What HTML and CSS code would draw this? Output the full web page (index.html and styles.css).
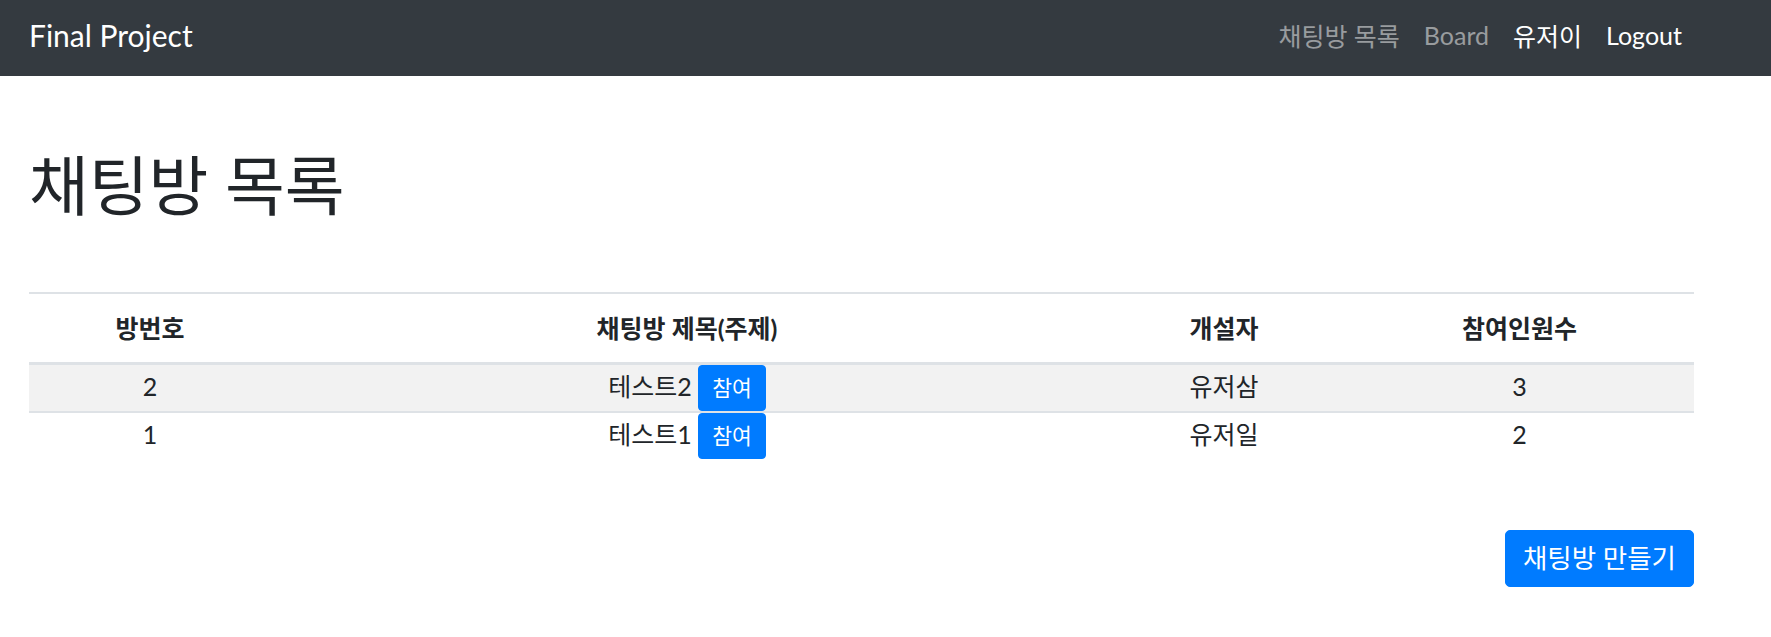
FILE: index.html
```html
<!DOCTYPE html>
<html lang="ko">
	<head>
		<meta charset="utf-8" />
		<title>채팅방 목록</title>
		<link rel="stylesheet" href="styles.css">
	</head>

	<body>
		<nav class="navbar">
			<div class="navbar-inner">
				<a class="brand" href="#">Final Project</a>
				<ul class="nav-menu">
					<li><a class="nav-link muted" href="#">채팅방 목록</a></li>
					<li><a class="nav-link muted" href="#">Board</a></li>
					<li><span class="nav-link">유저이</span></li>
					<li><a class="nav-link" href="#">Logout</a></li>
				</ul>
			</div>
		</nav>

		<div class="container">
			<h1 class="page-title">채팅방 목록</h1>

			<table class="room-table">
				<thead>
					<tr>
						<th class="col-no">방번호</th>
						<th class="col-title">채팅방 제목(주제)</th>
						<th class="col-owner">개설자</th>
						<th class="col-count">참여인원수</th>
					</tr>
				</thead>
				<tbody>
					<tr>
						<td>2</td>
						<td>테스트2 <button class="btn btn-join">참여</button></td>
						<td>유저삼</td>
						<td>3</td>
					</tr>
					<tr>
						<td>1</td>
						<td>테스트1 <button class="btn btn-join">참여</button></td>
						<td>유저일</td>
						<td>2</td>
					</tr>
				</tbody>
			</table>

			<div class="actions">
				<button class="btn btn-create">채팅방 만들기</button>
			</div>
		</div>
	</body>
</html>
```

FILE: styles.css
```css
* {
	padding: 0px;
	margin: 0px;
	box-sizing: border-box;
}
body {
	font-family: Lato, "Noto Sans CJK KR", sans-serif;
	font-size: 25px;
	color: #212529;
	background-color: #fff;
}
a {
	text-decoration: none;
}

/* 상단 메뉴 */
.navbar {
	height: 76px;
	background-color: #343a40;
}
.navbar-inner {
	width: 1665px;
	height: 100%;
	margin-left: 29px;
	padding-bottom: 6px;
	display: flex;
	align-items: center;
	justify-content: space-between;
}
.brand {
	font-size: 30px;
	color: #fff;
}
.nav-menu {
	list-style: none;
	display: flex;
	align-items: center;
}
.nav-link {
	display: block;
	padding: 0 12px;
	font-size: 25px;
	color: #fff;
}
.nav-link.muted {
	color: rgba(255, 255, 255, .5);
}

/* 본문 */
.container {
	width: 1665px;
	margin-left: 29px;
}
.page-title {
	margin-top: 70px;
	margin-bottom: 68px;
	font-size: 65px;
	font-weight: 400;
	line-height: 1.2;
}

.room-table {
	width: 100%;
	border-collapse: collapse;
}
.room-table th {
	padding: 17px 0;
	line-height: 34px;
	font-weight: 700;
	text-align: center;
	border-top: 2px solid #dee2e6;
	border-bottom: 3px solid #dee2e6;
}
.room-table td {
	padding: 0;
	line-height: 34px;
	text-align: center;
	vertical-align: baseline;
	border-top: 2px solid #dee2e6;
}
.room-table tbody tr:nth-child(odd) {
	background-color: #f2f2f2;
}
.col-no {
	width: 242px;
}
.col-title {
	width: 832px;
}
.col-owner {
	width: 242px;
}
.col-count {
	width: 349px;
}

.btn {
	display: inline-block;
	font-family: inherit;
	color: #fff;
	background-color: #007bff;
	border: 1px solid #007bff;
	cursor: pointer;
}
.btn-join {
	padding: 7px 13px;
	font-size: 21.5px;
	line-height: 30px;
	border-radius: 4px;
}

.actions {
	margin-top: 71px;
	display: flex;
	justify-content: flex-end;
}
.btn-create {
	padding: 9px 17px;
	font-size: 26.5px;
	line-height: 37px;
	border-radius: 5px;
}
```
